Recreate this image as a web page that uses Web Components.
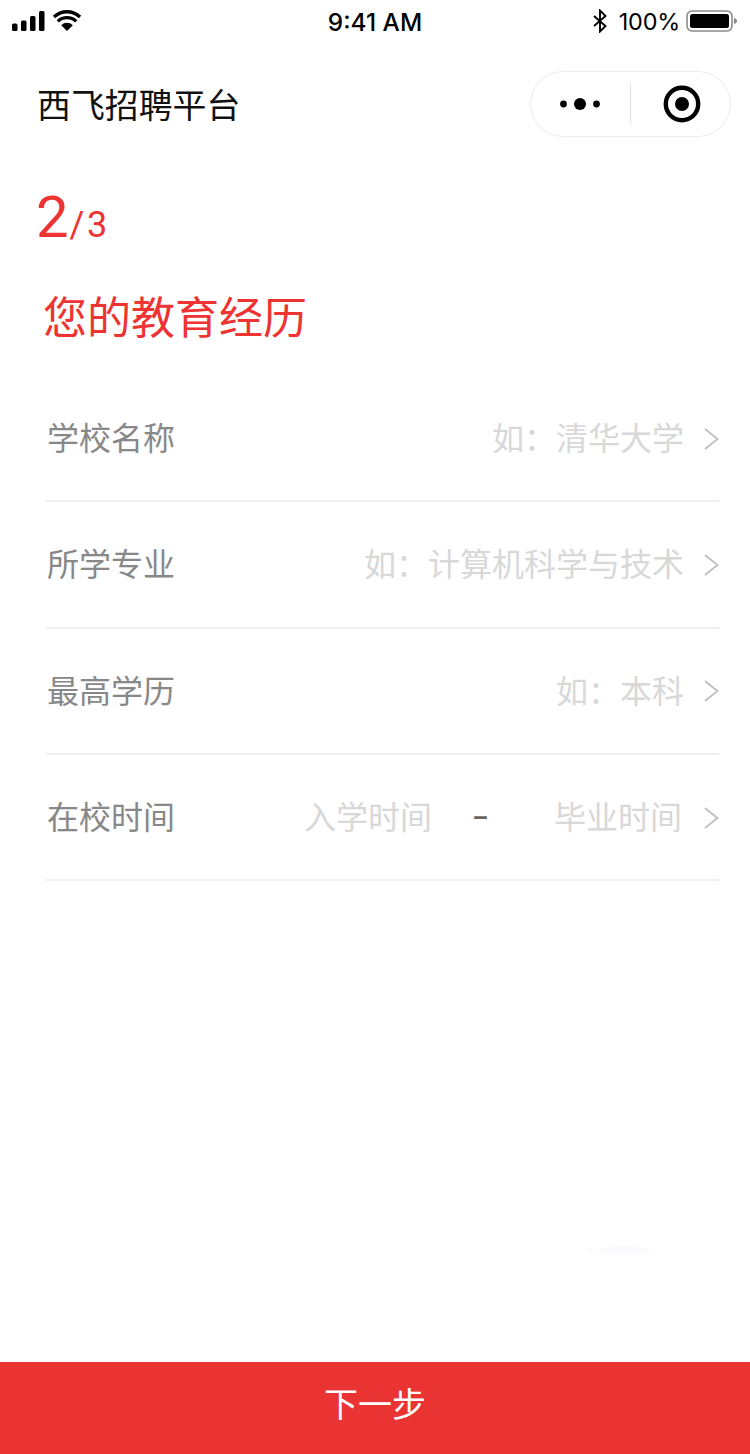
<!DOCTYPE html>
<html lang="zh-CN"><head><meta charset="utf-8"><style>
html,body{margin:0;padding:0;background:#fff}
body{width:750px;height:1454px;font-family:"Noto Sans CJK SC","Liberation Sans",sans-serif}
</style></head><body>
<app-page>
<status-bar slot="top"></status-bar>
<nav-bar slot="top" title="西飞招聘平台"></nav-bar>
<step-head></step-head>
<form-row label="学校名称" hint="如:清华大学"></form-row>
<form-row label="所学专业" hint="如:计算机科学与技术"></form-row>
<form-row label="最高学历" hint="如:本科"></form-row>
<form-row label="在校时间" from="入学时间" to="毕业时间"></form-row>
<faint-glow></faint-glow>
<next-button slot="bottom">下一步</next-button>
</app-page>
<script>
function def(name,html,init){customElements.define(name,class extends HTMLElement{
  connectedCallback(){if(this.shadowRoot)return;const r=this.attachShadow({mode:'open'});r.innerHTML=html;if(init)init(this,r);}
});}
def('app-page',`<style>:host{display:flex;flex-direction:column;height:1454px;overflow:hidden;background:#fff;position:relative}
main{flex:1;display:block;min-height:0}</style><slot name="top"></slot><main><slot></slot></main><slot name="bottom"></slot>`);
def('status-bar',`<style>:host{display:flex;align-items:center;justify-content:space-between;height:42px;padding:0 12px 0 12px;color:#000;font-family:Inter,"Liberation Sans",sans-serif;position:relative}
.l,.r{display:flex;align-items:center}
.t{position:absolute;left:0;right:0;top:1px;line-height:42px;text-align:center;font-size:24.4px;font-weight:500}
.r{font-size:23.4px;font-weight:400}
.p{margin:0 6px 0 12px;letter-spacing:-.2px}
svg{display:block}</style>
<div class="l"><svg width="70" height="22" viewBox="0 0 70 22">
<g fill="#000"><rect x="0" y="13.5" width="5.5" height="7.5" rx="1.5"/><rect x="9" y="10.5" width="5.5" height="10.5" rx="1.5"/><rect x="18" y="6" width="5.5" height="15" rx="1.5"/><rect x="27" y="1" width="5.5" height="20" rx="1.5"/>
<path d="M55 21 L49.2 15.2 A8.2 8.2 0 0 1 60.8 15.2Z"/></g>
<g fill="none" stroke="#000" stroke-width="3.4"><path d="M45.8 11.4A13.2 13.2 0 0 1 64.2 11.4"/><path d="M42 7A18.8 18.8 0 0 1 68 7"/></g></svg></div>
<div class="t">9:41 AM</div>
<div class="r"><svg width="14" height="24" viewBox="0 0 14 24" fill="none" stroke="#000" stroke-width="1.9"><path d="M1 7 L12.5 17 L7 22.5 V1.5 L12.5 7 L1 17"/></svg>
<span class="p">100%</span>
<svg width="52" height="24" viewBox="0 0 52 24"><rect x="1" y="2" width="45" height="20" rx="5" fill="none" stroke="#8a8a8a" stroke-width="1.6"/><rect x="4" y="5" width="39" height="14" rx="2.5" fill="#000"/><path d="M48 9c2 .4 3 1.6 3 3s-1 2.6-3 3z" fill="#8a8a8a"/></svg></div>`);
def('nav-bar',`<style>:host{display:flex;align-items:center;justify-content:space-between;height:124px;padding:0 19px 0 37px;box-sizing:border-box}
.t{font-size:33.9px;color:#111;line-height:46px;}
.c{display:flex;align-items:center;width:201px;height:66px;box-sizing:border-box;border:1.5px solid #ececec;border-radius:33px;margin-top:-1px}
.a,.b{flex:1;display:flex;justify-content:center;align-items:center}
.a svg{margin-right:1px}.b svg{margin-left:2px}
.d{width:1px;height:39px;background:#e0e0e0}
svg{display:block}</style>
<div class="t"></div><div class="c"><div class="a"><svg width="40" height="14" viewBox="0 0 40 14" fill="#000"><circle cx="3.5" cy="7" r="3.4"/><circle cx="20" cy="7" r="6"/><circle cx="36.5" cy="7" r="3.4"/></svg></div><div class="d"></div><div class="b"><svg width="38" height="38" viewBox="0 0 38 38"><circle cx="19" cy="19" r="16.2" fill="none" stroke="#000" stroke-width="4.4"/><circle cx="19" cy="19" r="7" fill="#000"/></svg></div></div>`,(h,r)=>{r.querySelector('.t').textContent=h.getAttribute('title')});
def('step-head',`<style>:host{display:block;color:#ee3333;padding:9px 0 0 36px;height:210px;box-sizing:border-box}
.n{font-family:Roboto,"Liberation Sans",sans-serif;font-weight:400;height:84px;display:flex;align-items:baseline;line-height:84px}
.b{font-size:58px}.s{font-size:36px;font-weight:400;letter-spacing:2.5px;margin-left:1px}
h1{margin:26px 0 0 7px;font-weight:400;font-size:44px;line-height:60px}</style>
<div class="n"><span class="b">2</span><span class="s">/3</span></div><h1>您的教育经历</h1>`);
def('form-row',`<style>:host{display:flex;align-items:center;margin:0 31px 0 46px;height:126.33px;box-sizing:border-box;border-bottom:2px solid #efefef;font-size:32px;line-height:44px}
.l{color:#888;flex:none;margin-top:-4px;margin-left:1px}.h{flex:1;display:flex;justify-content:flex-end;color:#d8d8d8;margin-top:-4px;white-space:pre}
.to{display:flex;flex:1;align-items:center;color:#d8d8d8;margin-left:129px;margin-top:-4px;white-space:nowrap}
.to span{flex:none}
.to .dash{width:98px;margin-right:26px;padding-left:41px;box-sizing:border-box;color:#666;font-family:"Noto Sans","Liberation Sans",sans-serif;font-size:30px;font-weight:500}
.end{margin-left:-2px}
svg{display:block;margin:1px 0 0 20px;flex:none}</style>
<div class="l"></div><div class="body" style="display:contents"></div><svg width="15" height="24" viewBox="0 0 15 24" fill="none" stroke="#bdbdbd" stroke-width="1.7"><path d="M1 2 L13.5 12 L1 22"/></svg>`,(h,r)=>{
 r.querySelector('.l').textContent=h.getAttribute('label');
 const b=r.querySelector('.body');
 if(h.hasAttribute('hint')){const d=document.createElement('div');d.className='h';d.textContent=h.getAttribute('hint').replace(':','\uFF1A');b.append(d);}
 else{const d=document.createElement('div');d.className='to';d.innerHTML='<span></span><span class="dash">–</span><span class="end"></span>';d.children[0].textContent=h.getAttribute('from');d.children[2].textContent=h.getAttribute('to');b.append(d);}
});
def('faint-glow',`<style>:host{display:block;position:absolute;left:588px;top:1246px;width:68px;height:9px;background:radial-gradient(ellipse at center,#f8f8ff 0,#fcfcff 55%,#fff 100%)}</style>`);
def('next-button',`<style>:host{display:flex;align-items:center;justify-content:center;height:92px;box-sizing:border-box;padding-bottom:12px;background:#ea3333;color:#fff;font-size:34px}</style><slot></slot>`);
</script>
</body></html>
